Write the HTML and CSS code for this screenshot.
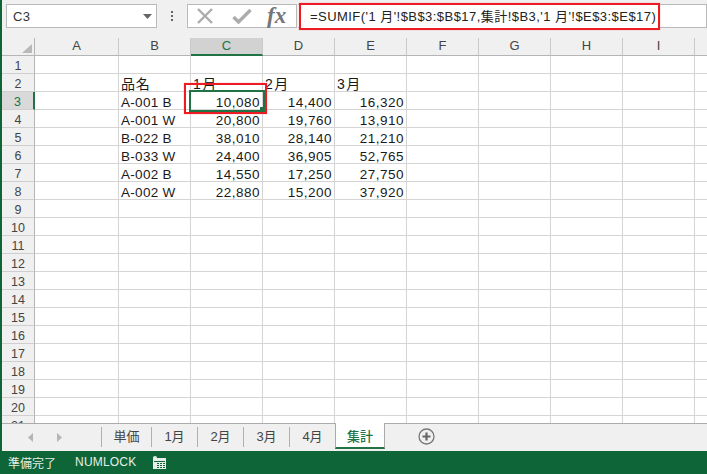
FILE: index.html
```html
<!DOCTYPE html>
<html lang="ja">
<head>
<meta charset="utf-8">
<title>集計</title>
<link rel="stylesheet" href="styles.css">
</head>
<body>
<div class="app">
  <div class="formula-row">
    <div class="name-box"><span>C3</span><svg class="caret" width="9" height="5" viewBox="0 0 9 5"><path d="M0 0h9L4.500 5z"/></svg></div>
    <svg class="dots" width="3" height="11" viewBox="0 0 3 11"><path d="M0 0h2v2H0zM0 4h2v2H0zM0 8h2v2H0z"/></svg>
    <div class="fx-box">
      <svg width="18" height="16" viewBox="0 0 18 16"><path d="M2 1l14 14M16 1L2 15" fill="none" stroke="#acacac" stroke-width="2.4"/></svg>
      <svg width="20" height="16" viewBox="0 0 20 16"><path d="M1.500 9l5 5L18.500 2" fill="none" stroke="#acacac" stroke-width="3.400"/></svg>
      <span class="fx">fx</span>
    </div>
    <div class="formula-box"><div class="formula-mark">=SUMIF('1 月'!$B$3:$B$17,集計!$B3,'1 月'!$E$3:$E$17)</div></div>
  </div>
  <div class="sheet">
    <div class="grid">
      <div class="rh corner"><svg width="10" height="9" viewBox="0 0 10 9"><path d="M10 0v9H0z"/></svg></div>
      <div class="ch">A</div><div class="ch">B</div><div class="ch sel">C</div><div class="ch">D</div><div class="ch">E</div><div class="ch">F</div><div class="ch">G</div><div class="ch">H</div><div class="ch">I</div><div class="ch"></div>

      <div class="rh">1</div><div></div><div></div><div></div><div></div><div></div><div></div><div></div><div></div><div></div><div></div>
      <div class="rh">2</div><div></div><div class="jp">品名</div><div class="jp">1 月</div><div class="jp">2 月</div><div class="jp">3 月</div><div></div><div></div><div></div><div></div><div></div>
      <div class="rh sel">3</div><div></div><div>A-001 B</div><div class="n">10,080</div><div class="n">14,400</div><div class="n">16,320</div><div></div><div></div><div></div><div></div><div></div>
      <div class="rh">4</div><div></div><div>A-001 W</div><div class="n">20,800</div><div class="n">19,760</div><div class="n">13,910</div><div></div><div></div><div></div><div></div><div></div>
      <div class="rh">5</div><div></div><div>B-022 B</div><div class="n">38,010</div><div class="n">28,140</div><div class="n">21,210</div><div></div><div></div><div></div><div></div><div></div>
      <div class="rh">6</div><div></div><div>B-033 W</div><div class="n">24,400</div><div class="n">36,905</div><div class="n">52,765</div><div></div><div></div><div></div><div></div><div></div>
      <div class="rh">7</div><div></div><div>A-002 B</div><div class="n">14,550</div><div class="n">17,250</div><div class="n">27,750</div><div></div><div></div><div></div><div></div><div></div>
      <div class="rh">8</div><div></div><div>A-002 W</div><div class="n">22,880</div><div class="n">15,200</div><div class="n">37,920</div><div></div><div></div><div></div><div></div><div></div>
      <div class="rh">9</div><div></div><div></div><div></div><div></div><div></div><div></div><div></div><div></div><div></div><div></div>
      <div class="rh">10</div><div></div><div></div><div></div><div></div><div></div><div></div><div></div><div></div><div></div><div></div>
      <div class="rh">11</div><div></div><div></div><div></div><div></div><div></div><div></div><div></div><div></div><div></div><div></div>
      <div class="rh">12</div><div></div><div></div><div></div><div></div><div></div><div></div><div></div><div></div><div></div><div></div>
      <div class="rh">13</div><div></div><div></div><div></div><div></div><div></div><div></div><div></div><div></div><div></div><div></div>
      <div class="rh">14</div><div></div><div></div><div></div><div></div><div></div><div></div><div></div><div></div><div></div><div></div>
      <div class="rh">15</div><div></div><div></div><div></div><div></div><div></div><div></div><div></div><div></div><div></div><div></div>
      <div class="rh">16</div><div></div><div></div><div></div><div></div><div></div><div></div><div></div><div></div><div></div><div></div>
      <div class="rh">17</div><div></div><div></div><div></div><div></div><div></div><div></div><div></div><div></div><div></div><div></div>
      <div class="rh">18</div><div></div><div></div><div></div><div></div><div></div><div></div><div></div><div></div><div></div><div></div>
      <div class="rh">19</div><div></div><div></div><div></div><div></div><div></div><div></div><div></div><div></div><div></div><div></div>
      <div class="rh">20</div><div></div><div></div><div></div><div></div><div></div><div></div><div></div><div></div><div></div><div></div>
      <div class="rh">21</div><div></div><div></div><div></div><div></div><div></div><div></div><div></div><div></div><div></div><div></div>
    </div>
    <div class="cell-cursor"><i class="handle"></i></div>
    <div class="cell-mark"></div>
  </div>
  <div class="tabs">
    <div class="nav">
      <svg width="5" height="9" viewBox="0 0 5 9"><path d="M5 0v9L0 4.500z"/></svg>
      <svg width="5" height="9" viewBox="0 0 5 9"><path d="M0 0v9l5-4.500z"/></svg>
    </div>
    <div class="tab w-wide">単価</div>
    <div class="tab">1月</div>
    <div class="tab">2月</div>
    <div class="tab">3月</div>
    <div class="tab">4月</div>
    <div class="tab active">集計</div>
    <svg class="add" width="17" height="17" viewBox="0 0 17 17"><circle cx="8.500" cy="8.500" r="7.500" fill="none" stroke="#777" stroke-width="1.300"/><path d="M8.500 4.500v8M4.500 8.500h8" stroke="#666" stroke-width="2.200"/></svg>
  </div>
  <div class="status">
    <span class="ready">準備完了</span>
    <span class="numlock">NUMLOCK</span>
    <svg width="13" height="13" viewBox="0 0 13 13"><path fill="#e6efe9" d="M0 2a2 2 0 0 1 4 0h9v11H0z"/><path fill="#0e6537" d="M1 5h11v1H1zM4 7h2v1H4zM7 7h2v1H7zM10 7h2v1h-2zM4 9h2v1H4zM7 9h2v1H7zM10 9h2v1h-2zM4 11h2v1H4zM7 11h2v1H7zM10 11h2v1h-2z"/></svg>
  </div>
</div>
</body>
</html>
```
FILE: styles.css
```css
* { box-sizing: border-box; }
html, body { margin: 0; height: 100%; overflow: hidden; background: #f0f0f0; }
body { font-family: "Liberation Sans", "Noto Sans CJK JP", sans-serif; color: #1a1a1a; }
.app { width: 707px; height: 474px; display: flex; flex-direction: column; border-left: 2px solid #0e6537; }

.formula-row { height: 38px; flex: none; display: flex; align-items: flex-start; padding: 4px 0 0 4px; background: #f0f0f0; }
.name-box { width: 151px; height: 24px; background: #fff; border: 1px solid #b9b9b9; display: flex; align-items: center; justify-content: space-between; padding: 0 4px 0 6px; font-size: 13px; letter-spacing: .4px; color: #333; }
.caret { fill: #666; }
.dots { fill: #666; margin: 7px 13px 0 14px; flex: none; }
.fx-box { width: 110px; height: 24px; background: #fff; border: 1px solid #b9b9b9; display: flex; align-items: center; gap: 18px; padding: 0 6px 0 8px; flex: none; }
.fx { font-family: "Liberation Serif", serif; font-style: italic; font-weight: bold; font-size: 23px; line-height: 22px; color: #767676; margin-left: -3px; }
.formula-box { flex: 1; height: 24px; background: #fff; border: 1px solid #b9b9b9; border-left: 0; position: relative; margin-left: 1px; }
.formula-mark { position: absolute; left: 1px; top: -2px; width: 361px; height: 27px; border: 2px solid #ed1c24; box-shadow: 0 0 1px #f08088; font-size: 13px; line-height: 23px; padding-left: 9px; white-space: nowrap; letter-spacing: .45px; color: #222; background: #fff; }

.sheet { flex: 1; position: relative; overflow: hidden; background: #fff; }
.grid { display: grid; grid-template-columns: 33px 84px repeat(9, 72px); grid-auto-rows: 18px; width: 705px; font-size: 13.500px; }
.grid > div { border-right: 1px solid #d4d4d4; border-bottom: 1px solid #d4d4d4; padding: 0 2px; line-height: 21px; white-space: nowrap; overflow: hidden; letter-spacing: .3px; }
.grid > .n { text-align: right; padding-right: 2px; letter-spacing: .5px; }
.grid > .jp { font-size: 14px; letter-spacing: .8px; word-spacing: -4px; }
.grid > .rh, .grid > .ch { background: #f0f0f0; text-align: center; color: #444; font-size: 13px; border-color: #b5b5b5; padding: 0; letter-spacing: 0; }
.grid > .ch { border-right-color: #c9c9c9; line-height: 16px; }
.grid > .rh { border-bottom-color: #cfcfcf; font-size: 12.500px; }
.grid > .corner { border-bottom-color: #b5b5b5; padding: 6px 2px 0 20px; line-height: 0; }
.corner svg { fill: #b9b9b9; }
.grid > .ch.sel { background: #d2d2d2; color: #217346; border-bottom: 2px solid #217346; line-height: 16px; }
.grid > .rh.sel { background: #d9d9d9; color: #217346; border-right: 2px solid #217346; }

.cell-cursor { position: absolute; left: 187px; top: 52px; width: 76px; height: 22px; border: 2px solid #217346; }
.handle { position: absolute; right: -2px; bottom: -2px; width: 5px; height: 5px; background: #217346; }
.cell-mark { position: absolute; left: 182px; top: 45px; width: 83px; height: 31px; border: 2px solid #ed1c24; box-shadow: 0 0 1px #f08088; }

.tabs { height: 28px; flex: none; display: flex; align-items: flex-start; background: #f0f0f0; border-top: 1px solid #ababab; position: relative; z-index: 1; }
.nav { width: 99px; display: flex; gap: 24px; padding: 9px 0 0 26px; fill: #b5b5b5; }
.tab { width: 46px; height: 20px; margin-top: 3px; border-left: 1px solid #b0b0b0; text-align: center; font-size: 13px; line-height: 20px; color: #444; }
.w-wide { width: 50px; }
.tab.active { width: 50px; height: 26px; margin-top: -1px; padding-top: 4px; background: #fff; color: #217346; border: 1px solid #ababab; border-top: 0; border-bottom: 2px solid #217346; font-weight: 500; }
.add { margin: 4px 0 0 33px; }

.status { height: 23px; flex: none; margin-left: -2px; background: #0e6537; color: #e6efe9; display: flex; align-items: center; padding: 0 0 1px 8px; font-size: 12px; }
.numlock { margin-left: 19px; margin-right: 17px; letter-spacing: .2px; }
```
